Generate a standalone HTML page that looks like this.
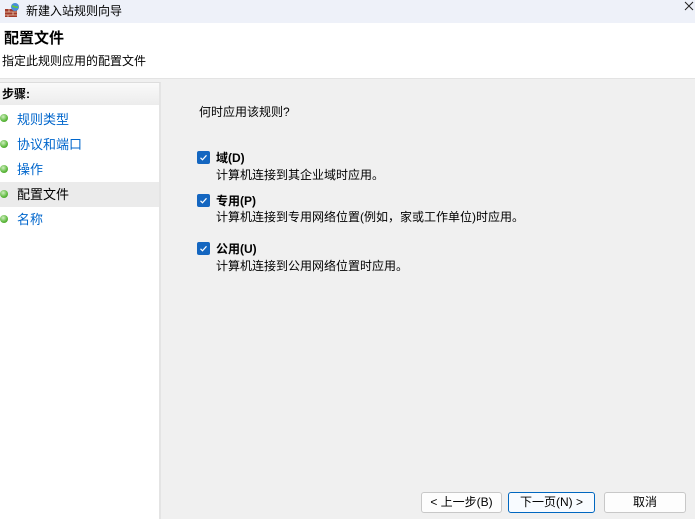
<!DOCTYPE html>
<html><head><meta charset="utf-8"><style>
*{margin:0;padding:0;box-sizing:border-box}
body{width:695px;height:519px;overflow:hidden;background:#f0f0f0;font-family:"Liberation Sans","Noto Sans CJK SC",sans-serif;font-size:12px;color:#000;position:relative}
.abs{position:absolute}
.title{left:0;top:0;width:695px;height:23px;background:#eef1f9}
.hdr{left:0;top:23px;width:695px;height:56px;background:#fff;border-bottom:1px solid #e3e3e3}
.left{left:0;top:82px;width:161px;height:437px;background:#fff;border-right:2px solid #e4e4e4;border-top:1px solid #ddd}
.steph{left:0;top:83px;width:159px;height:22px;background:linear-gradient(#fafafa,#ececec)}
.dot{width:8px;height:8px;border-radius:50%;background:radial-gradient(circle at 40% 35%,#cfeec0,#5bb83a 60%,#3d8a25)}
.lnk{color:#0066cc;font-size:13px}
.cb{width:13px;height:13px;background:#1466c0;border-radius:2px}
.btn{height:21px;border:1px solid #c8c8c8;border-radius:3px;background:#fdfdfd;text-align:center;line-height:19px;font-size:12px}
</style></head><body>
<div class="abs title"></div>
<svg class="abs" style="left:4px;top:2px" width="16" height="16"><rect x="1" y="7" width="12" height="8" fill="#a33a2a"/><path d="M1 10h12M1 13h12M5 7v3M9 10v3M4 13v2" stroke="#e8c8b0" stroke-width="0.8"/><circle cx="11" cy="5" r="4" fill="#4a8fd8"/><path d="M8 4c2 0 3 2 6 1" stroke="#6c3" stroke-width="1.5" fill="none"/></svg>
<div class="abs" style="left:26px;top:2px;font-size:12px">新建入站规则向导</div>
<svg class="abs" style="left:684px;top:1px" width="10" height="10"><path d="M1 1l8 8M9 1l-8 8" stroke="#222" stroke-width="1"/></svg>
<div class="abs hdr"></div>
<div class="abs" style="left:4px;top:27px;font-size:15px;font-weight:bold">配置文件</div>
<div class="abs" style="left:2px;top:52px;font-size:12px">指定此规则应用的配置文件</div>
<div class="abs left"></div>
<div class="abs steph"></div>
<div class="abs" style="left:2px;top:85px;font-weight:bold">步骤:</div>
<div class="abs" style="left:0;top:182px;width:159px;height:25px;background:#ebebeb"></div>
<div class="abs dot" style="left:0;top:114px"></div><div class="abs lnk" style="left:17px;top:109px">规则类型</div>
<div class="abs dot" style="left:0;top:140px"></div><div class="abs lnk" style="left:17px;top:134px">协议和端口</div>
<div class="abs dot" style="left:0;top:165px"></div><div class="abs lnk" style="left:17px;top:159px">操作</div>
<div class="abs dot" style="left:0;top:190px"></div><div class="abs" style="left:17px;top:184px;font-size:13px">配置文件</div>
<div class="abs dot" style="left:0;top:215px"></div><div class="abs lnk" style="left:17px;top:209px">名称</div>
<div class="abs" style="left:199px;top:103px">何时应用该规则?</div>
<svg class="abs" style="left:197px;top:151px" width="13" height="13"><rect width="13" height="13" rx="2" fill="#1466c0"/><path d="M3.5 6.8l2 2 4-4.5" stroke="#fff" stroke-width="1.2" fill="none"/></svg>
<div class="abs" style="left:216px;top:149px;font-weight:bold">域(D)</div>
<div class="abs" style="left:216px;top:166px">计算机连接到其企业域时应用。</div>
<svg class="abs" style="left:197px;top:194px" width="13" height="13"><rect width="13" height="13" rx="2" fill="#1466c0"/><path d="M3.5 6.8l2 2 4-4.5" stroke="#fff" stroke-width="1.2" fill="none"/></svg>
<div class="abs" style="left:216px;top:192px;font-weight:bold">专用(P)</div>
<div class="abs" style="left:216px;top:208px">计算机连接到专用网络位置(例如，家或工作单位)时应用。</div>
<svg class="abs" style="left:197px;top:242px" width="13" height="13"><rect width="13" height="13" rx="2" fill="#1466c0"/><path d="M3.5 6.8l2 2 4-4.5" stroke="#fff" stroke-width="1.2" fill="none"/></svg>
<div class="abs" style="left:216px;top:240px;font-weight:bold">公用(U)</div>
<div class="abs" style="left:216px;top:257px">计算机连接到公用网络位置时应用。</div>
<div class="abs btn" style="left:421px;top:492px;width:81px">&lt; 上一步(B)</div>
<div class="abs btn" style="left:508px;top:492px;width:87px;border-color:#0067c0;background:#f8fbff">下一页(N) &gt;</div>
<div class="abs btn" style="left:604px;top:492px;width:82px">取消</div>
</body></html>
